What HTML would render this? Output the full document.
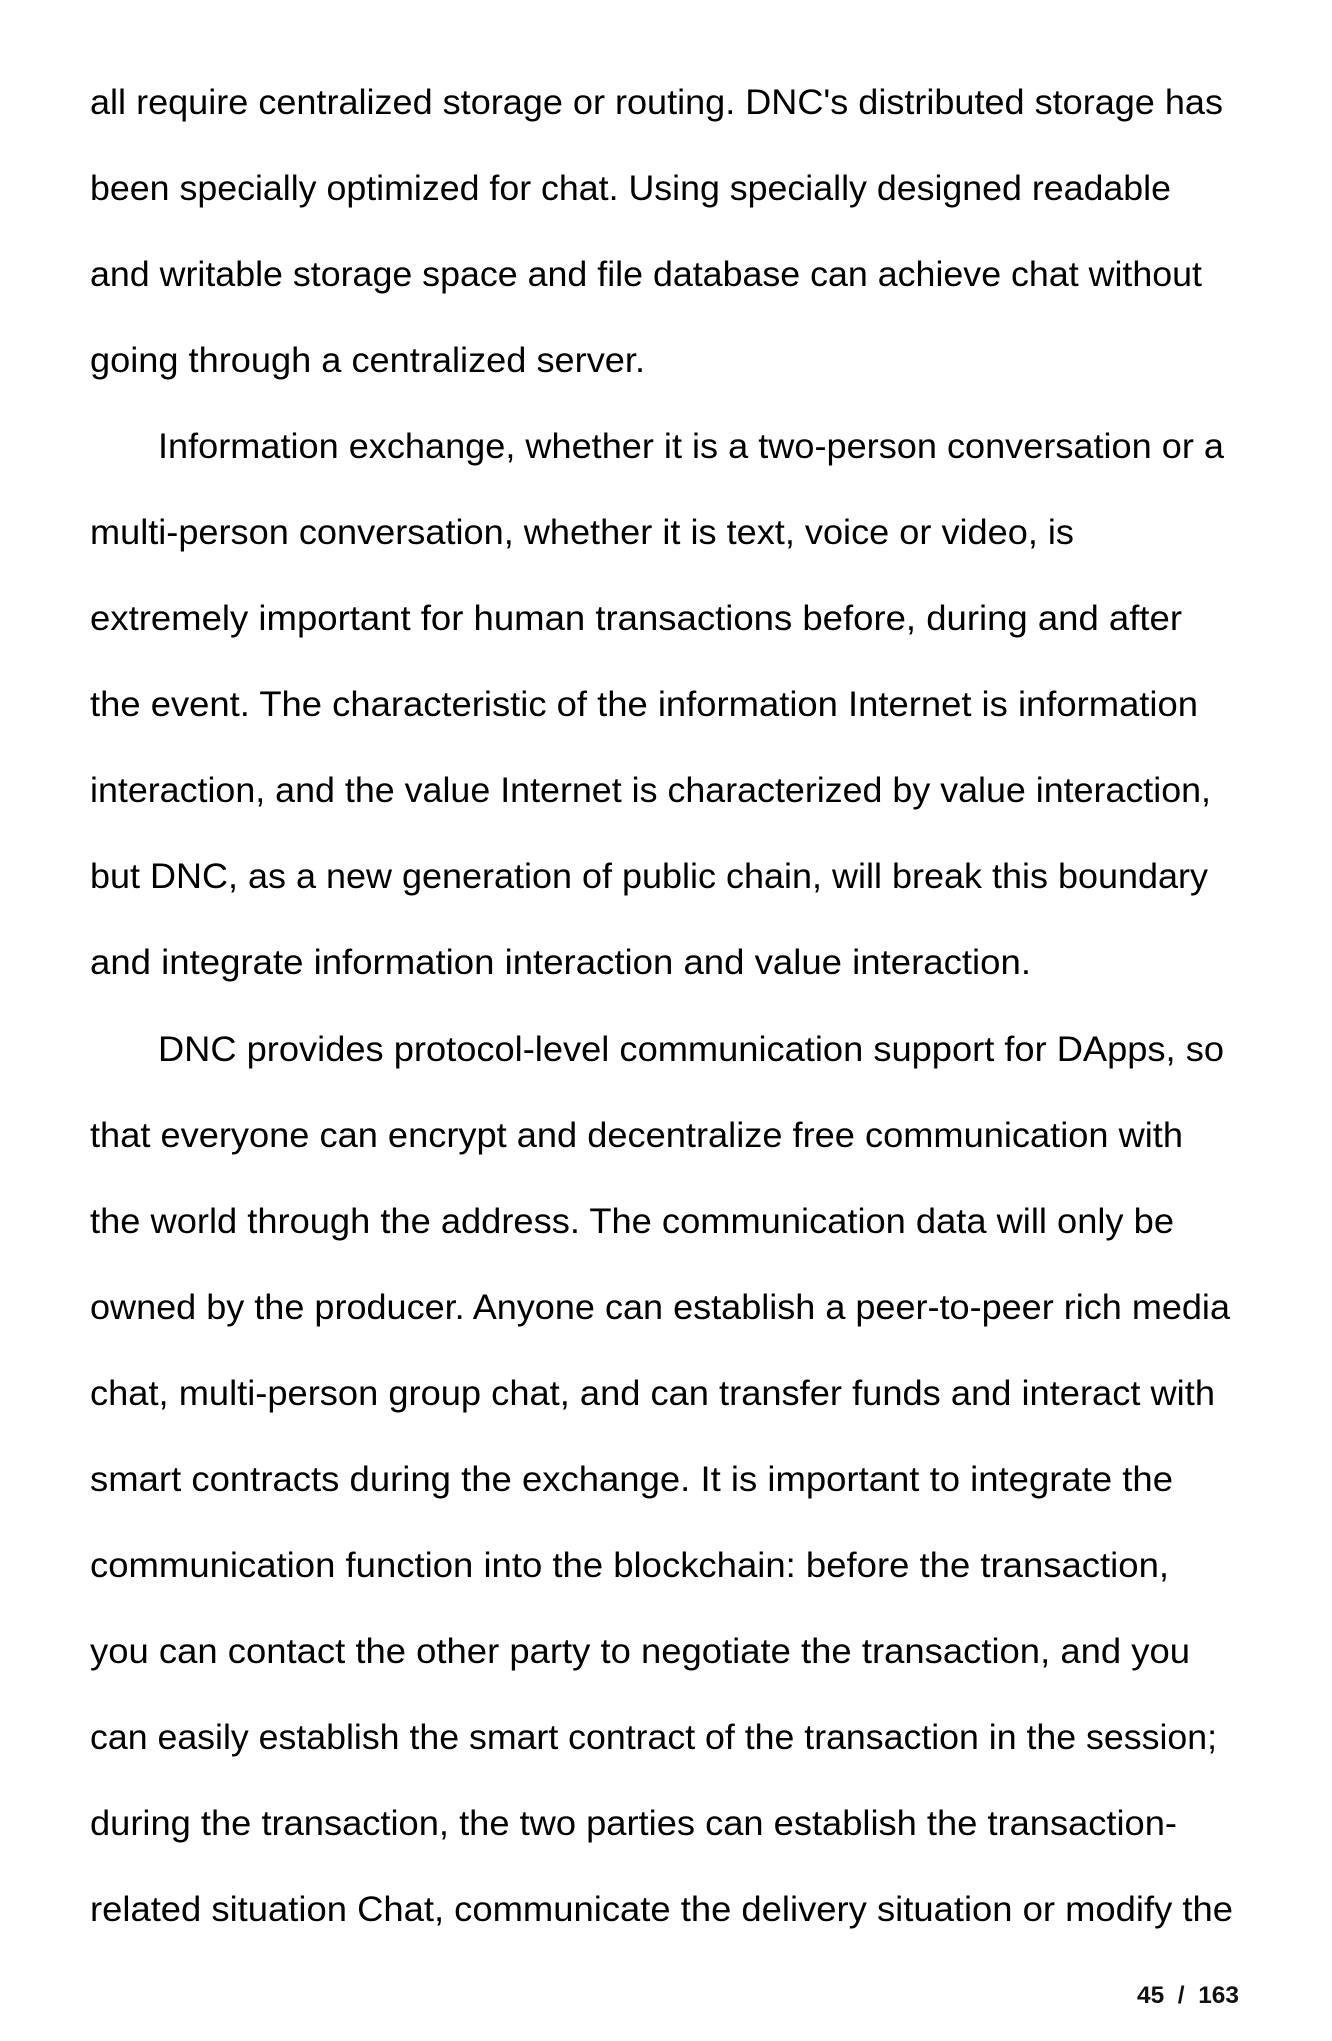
<!DOCTYPE html>
<html><head><meta charset="utf-8"><style>
html,body{margin:0;padding:0;background:#fff;}
body{width:1332px;height:2041px;position:relative;overflow:hidden;font-family:"Liberation Sans",sans-serif;color:#000;}
#t{position:absolute;left:0;top:59.5px;}
.l{height:86.1px;line-height:86.1px;font-size:35px;white-space:nowrap;position:relative;}
.l span{position:absolute;left:0;top:0;transform-origin:0 0;display:inline-block;}
#pg{position:absolute;left:1137px;top:1983px;font-size:24px;line-height:26px;white-space:pre;color:#111;font-weight:bold;transform-origin:0 0;display:inline-block;}
</style></head><body>
<div id="t">
<div class="l" data-x="90" data-r="1223"><span>all require centralized storage or routing. DNC's distributed storage has</span></div>
<div class="l" data-x="90" data-r="1171"><span>been specially optimized for chat. Using specially designed readable</span></div>
<div class="l" data-x="90" data-r="1202"><span>and writable storage space and file database can achieve chat without</span></div>
<div class="l" data-x="90" data-r="645"><span>going through a centralized server.</span></div>
<div class="l" data-x="158" data-r="1224"><span>Information exchange, whether it is a two-person conversation or a</span></div>
<div class="l" data-x="90" data-r="1074"><span>multi-person conversation, whether it is text, voice or video, is</span></div>
<div class="l" data-x="90" data-r="1182"><span>extremely important for human transactions before, during and after</span></div>
<div class="l" data-x="90" data-r="1198"><span>the event. The characteristic of the information Internet is information</span></div>
<div class="l" data-x="90" data-r="1211"><span>interaction, and the value Internet is characterized by value interaction,</span></div>
<div class="l" data-x="90" data-r="1208"><span>but DNC, as a new generation of public chain, will break this boundary</span></div>
<div class="l" data-x="90" data-r="1031"><span>and integrate information interaction and value interaction.</span></div>
<div class="l" data-x="158" data-r="1224"><span>DNC provides protocol-level communication support for DApps, so</span></div>
<div class="l" data-x="90" data-r="1183"><span>that everyone can encrypt and decentralize free communication with</span></div>
<div class="l" data-x="90" data-r="1174"><span>the world through the address. The communication data will only be</span></div>
<div class="l" data-x="90" data-r="1230"><span>owned by the producer. Anyone can establish a peer-to-peer rich media</span></div>
<div class="l" data-x="90" data-r="1215"><span>chat, multi-person group chat, and can transfer funds and interact with</span></div>
<div class="l" data-x="90" data-r="1173"><span>smart contracts during the exchange. It is important to integrate the</span></div>
<div class="l" data-x="90" data-r="1169"><span>communication function into the blockchain: before the transaction,</span></div>
<div class="l" data-x="90" data-r="1190"><span>you can contact the other party to negotiate the transaction, and you</span></div>
<div class="l" data-x="90" data-r="1217"><span>can easily establish the smart contract of the transaction in the session;</span></div>
<div class="l" data-x="90" data-r="1177"><span>during the transaction, the two parties can establish the transaction-</span></div>
<div class="l" data-x="90" data-r="1233"><span>related situation Chat, communicate the delivery situation or modify the</span></div>
</div>
<div id="pg">45  /  163</div>
<script>
document.querySelectorAll('.l').forEach(function(d){
  var s=d.firstChild, x=+d.dataset.x, r=+d.dataset.r;
  s.style.left=x+'px';
  var w=s.getBoundingClientRect().width;
  s.style.transform='scaleX('+((r-x)/w)+')';
});
var p=document.getElementById('pg');var pw=p.getBoundingClientRect().width;
p.style.transform='scaleX('+(102/pw)+')';
</script>
</body></html>
